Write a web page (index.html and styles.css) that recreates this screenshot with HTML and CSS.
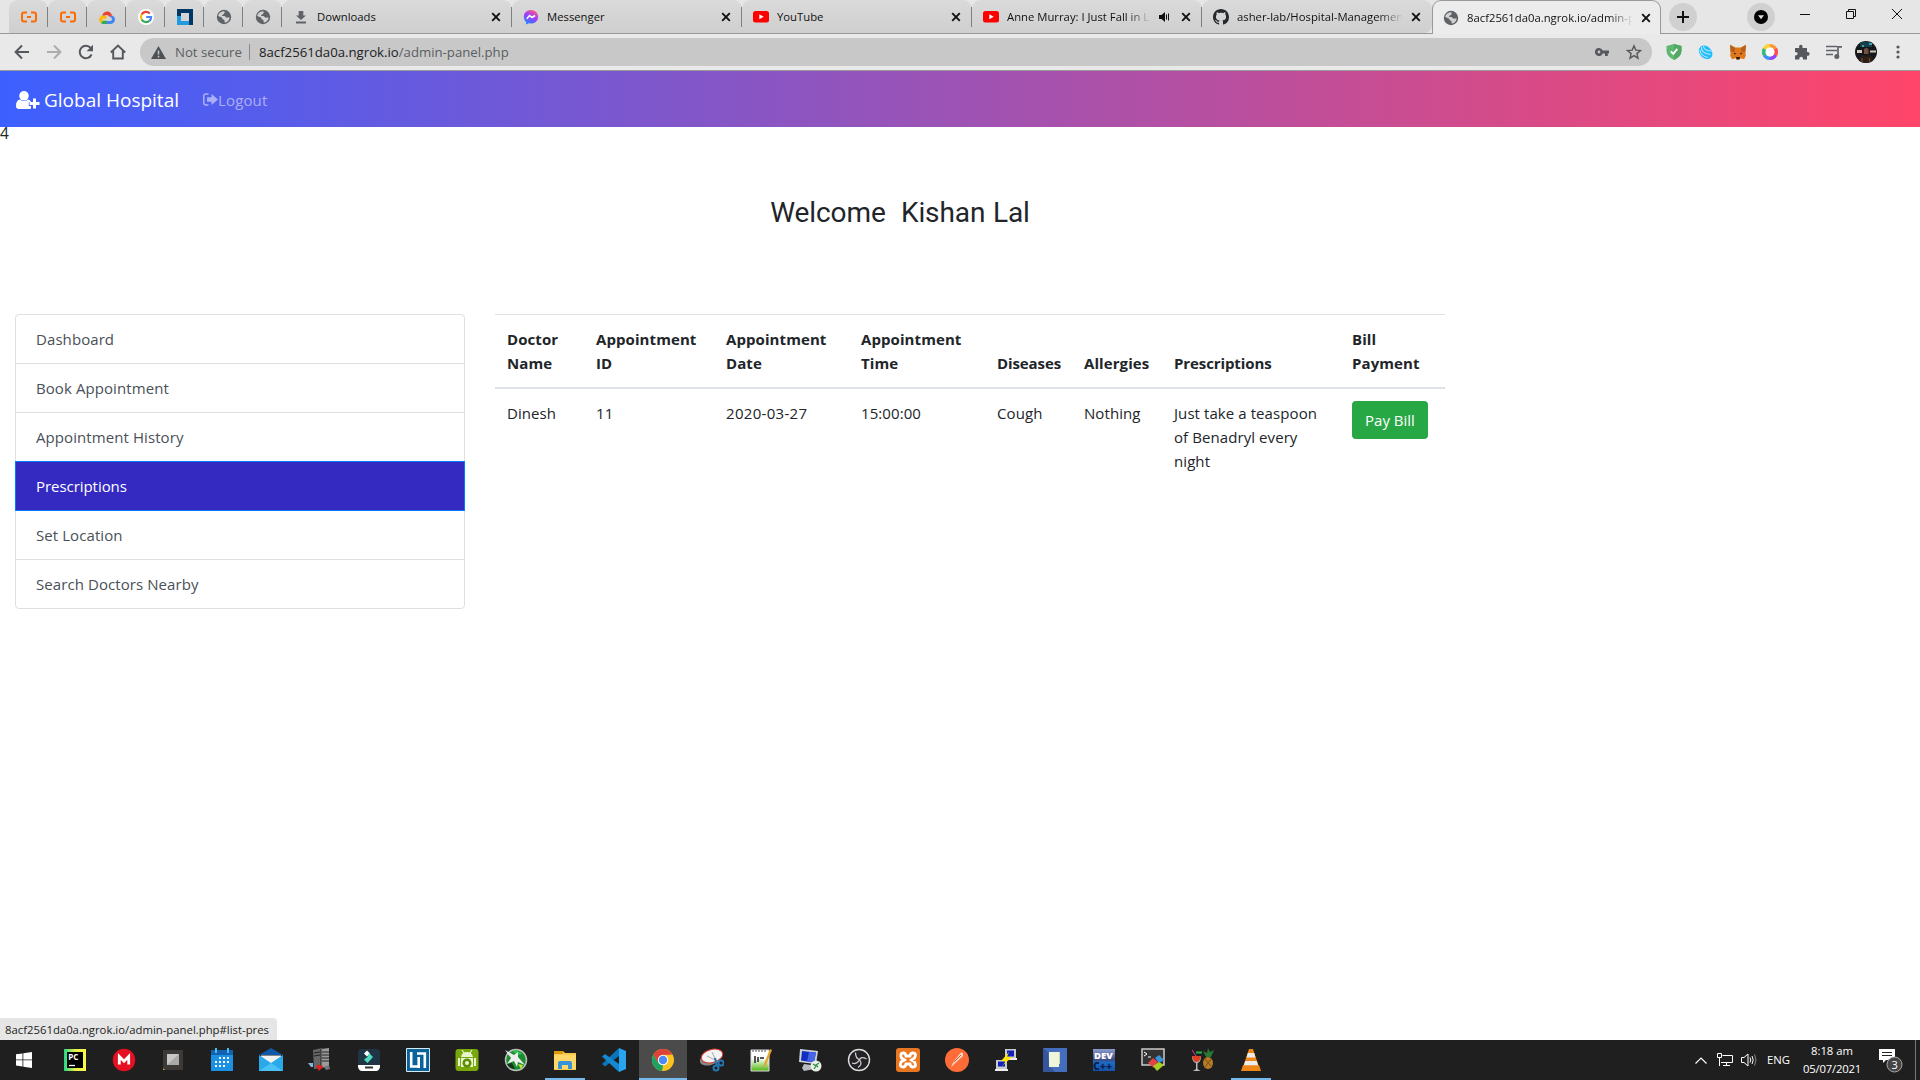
FILE: index.html
```html
<!DOCTYPE html>
<html lang="en">
<head>
<meta charset="utf-8">
<title>Global Hospital</title>
<link rel="stylesheet" href="styles.css">
</head>
<body>
<svg width="0" height="0" class="defs">
  <defs>
    <symbol id="globe" viewBox="0 0 16 16"><circle cx="8" cy="8" r="7.2" fill="#5f6368"/><path d="M2.200 6.500C3 4 5 2.400 7.600 2.200c1.300.1 1.600.8.9 1.600-.5.6-.3 1-1 1.500-.8.4-1.500.3-1.400 1.100.1.9 1.200.5 2.200.6 1.200.1 1.100 1.400 2.100 1.600 1 .2 2.200-.3 3.300.2-.3 2.200-2 4.300-4.500 4.800-.9-.1-.7-1.100-.6-2-.1-1-1.700-.8-2.200-1.900-.3-1-.7-1.400-1.700-1.700-.9-.2-1.900-.5-2.500-1.500z" fill="#d2d2d2"/></symbol>
    <symbol id="x" viewBox="0 0 10 10"><path d="M1.200 1.200l7.600 7.600M8.800 1.200L1.200 8.800" stroke="#111" stroke-width="1.900" fill="none"/></symbol>
    <symbol id="yt" viewBox="0 0 16 12"><rect width="16" height="11.500" rx="2.500" fill="#f00"/><path d="M6.300 3.300v5l4.400-2.500z" fill="#fff"/></symbol>
    <symbol id="ali" viewBox="0 0 18 12"><path d="M7 1.500H4Q2 1.500 2 3.500v5q0 2 2 2h3M11 1.500h3q2 0 2 2v5q0 2-2 2h-3M7 6h4" fill="none" stroke="#ff6a00" stroke-width="2"/></symbol>
  </defs>
</svg>

<header class="tabstrip">
  <div class="tab pinned"><svg width="18" height="12"><use href="#ali"/></svg></div>
  <div class="tab pinned"><svg width="18" height="12"><use href="#ali"/></svg></div>
  <div class="tab pinned"><svg width="16" height="13" viewBox="0 0 16 13"><path d="M3 4.500Q5 0 9 .5q3 .5 4 4L11 6Q8 2.500 5 5z" fill="#ea4335"/><path d="M13 4.500q3 1 3 4.300-.5 3.700-4.500 4.200H8v-3h3.500q1.800-.3 1.500-2Q12.500 6 10.800 6z" fill="#4285f4"/><path d="M8 13H4.500Q3 13 1.800 12L4 9.800h4z" fill="#34a853"/><path d="M3 4.500Q0 6 0 9q.4 2.200 1.800 3L4 9.800Q3 9 3.500 8q1-1.200 2.500.3L8.200 6Q6.500 4 3 4.500z" fill="#fbbc05"/></svg></div>
  <div class="tab pinned"><svg width="16" height="16" viewBox="0 0 16 16"><circle cx="8" cy="8" r="8" fill="#fff"/><g fill="none" stroke-width="2.200"><path d="M11.800 4.400A5.100 5.100 0 0 0 3.600 5.600" stroke="#ea4335"/><path d="M3.600 5.500a5.100 5.100 0 0 0 0 5" stroke="#fbbc05"/><path d="M3.600 10.400a5.100 5.100 0 0 0 7.900 1.400" stroke="#34a853"/><path d="M11.400 11.900A5 5 0 0 0 13.100 8H8.200" stroke="#4285f4"/></g></svg></div>
  <div class="tab pinned"><svg width="16" height="16" viewBox="0 0 16 16"><path d="M0 0h16v16h-4V4H4v3H0z" fill="#003764"/><path d="M0 7h4v5h8v4H0z" fill="#1f9bde"/></svg></div>
  <div class="tab pinned"><svg width="16" height="16"><use href="#globe"/></svg></div>
  <div class="tab pinned"><svg width="16" height="16"><use href="#globe"/></svg></div>
  <div class="tab"><svg width="16" height="16" viewBox="0 0 16 16"><path d="M5.700 2h4.600v4.500H13L8 11 3 6.500h2.700zM3 12.500h10v2H3z" fill="#5f6368"/></svg><span class="tab-title">Downloads</span><svg class="close" width="10" height="10"><use href="#x"/></svg></div>
  <div class="tab"><svg width="16" height="16" viewBox="0 0 16 16"><defs><linearGradient id="mg" x1="0.200" y1="1" x2="0.700" y2="0"><stop offset="0" stop-color="#1a8dff"/><stop offset=".55" stop-color="#9a3cff"/><stop offset="1" stop-color="#ff5c80"/></linearGradient></defs><path d="M8 1c4.200 0 7.200 3 7.200 6.800s-3 6.800-7.200 6.800l-2.200-.3L3 15.500v-2.600C1.500 11.500.8 9.800.8 7.800.8 4 3.800 1 8 1z" fill="url(#mg)"/><path d="M3.800 9.700l2.700-3.200 2.600 2 3-2" stroke="#fff" stroke-width="1.600" fill="none"/></svg><span class="tab-title">Messenger</span><svg class="close" width="10" height="10"><use href="#x"/></svg></div>
  <div class="tab"><svg width="16" height="12"><use href="#yt"/></svg><span class="tab-title">YouTube</span><svg class="close" width="10" height="10"><use href="#x"/></svg></div>
  <div class="tab"><svg width="16" height="12"><use href="#yt"/></svg><span class="tab-title fade short">Anne Murray: I Just Fall in L</span><svg width="11" height="10" viewBox="0 0 11 10"><path d="M0 3h2.500L6 0v10L2.500 7H0z" fill="#111"/><path d="M7.500 2.500v5M9.500 1.500v7" stroke="#111"/></svg><svg class="close" width="10" height="10"><use href="#x"/></svg></div>
  <div class="tab nosep"><svg width="16" height="16" viewBox="0 0 16 16"><path fill="#24292e" d="M8 0C3.580 0 0 3.580 0 8c0 3.540 2.290 6.530 5.470 7.590.4.070.55-.17.55-.38 0-.19-.01-.82-.01-1.490-2.010.37-2.530-.49-2.690-.94-.09-.23-.48-.94-.82-1.130-.28-.15-.68-.52-.01-.53.63-.01 1.080.58 1.230.82.720 1.210 1.870.87 2.330.66.070-.52.280-.87.510-1.070-1.780-.2-3.640-.89-3.640-3.950 0-.87.310-1.590.82-2.150-.08-.2-.36-1.020.08-2.120 0 0 .67-.21 2.200.82.640-.18 1.320-.27 2-.27s1.360.09 2 .27c1.530-1.040 2.200-.82 2.200-.82.44 1.100.16 1.920.08 2.120.51.56.82 1.270.82 2.150 0 3.070-1.870 3.750-3.650 3.950.29.25.54.73.54 1.480 0 1.070-.01 1.930-.01 2.200 0 .21.150.46.55.38A8.010 8.010 0 0 0 16 8c0-4.420-3.580-8-8-8z"/></svg><span class="tab-title fade">asher-lab/Hospital-Managemen</span><svg class="close" width="10" height="10"><use href="#x"/></svg></div>
  <div class="tab active"><svg width="16" height="16"><use href="#globe"/></svg><span class="tab-title fade">8acf2561da0a.ngrok.io/admin-p</span><svg class="close" width="10" height="10"><use href="#x"/></svg></div>
  <div class="round plus"><svg width="12" height="12" viewBox="0 0 12 12"><path d="M6 0v12M0 6h12" stroke="#111" stroke-width="2"/></svg></div>
  <div class="round search"><svg width="14" height="14" viewBox="0 0 14 14"><circle cx="7" cy="7" r="7" fill="#000"/><path d="M4 5.300h6L7 9.300z" fill="#ddd"/></svg></div>
  <div class="winctl">
    <svg width="10" height="10" viewBox="0 0 10 10"><path d="M0 5.500h10" stroke="#111"/></svg>
    <svg width="10" height="10" viewBox="0 0 10 10"><path d="M.5 2.500h7v7h-7zM2.500 2.500v-2h7v7h-2" stroke="#111" fill="none"/></svg>
    <svg width="10" height="10" viewBox="0 0 10 10"><path d="M0 0l10 10M10 0L0 10" stroke="#111" fill="none"/></svg>
  </div>
</header>

<div class="toolbar">
  <svg class="tb" viewBox="0 0 16 16"><path d="M15 8H2M8 1.500L1.600 8 8 14.500" fill="none" stroke="#55585c" stroke-width="2"/></svg>
  <svg class="tb" viewBox="0 0 16 16"><path d="M1 8h13M8 1.500L14.400 8 8 14.500" fill="none" stroke="#acacac" stroke-width="2"/></svg>
  <svg class="tb" viewBox="0 0 16 16"><path d="M13.600 10.500A6.200 6.200 0 1 1 12.700 4" fill="none" stroke="#55585c" stroke-width="2"/><path d="M15 .8v6.400H8.600z" fill="#55585c"/></svg>
  <svg class="tb" viewBox="0 0 16 16"><path d="M.8 8.500L8 1.600l7.200 6.900M3.200 7v7.500h9.600V7" fill="none" stroke="#55585c" stroke-width="1.900"/></svg>
  <div class="omnibox">
    <svg width="15" height="13" viewBox="0 0 15 13"><path d="M7.500 0L15 13H0z" fill="#4d5054"/><path d="M7.500 4.500v4M7.500 9.800v1.600" stroke="#c8c8c8" stroke-width="1.500"/></svg>
    <span class="secure">Not secure</span>
    <span class="divider"></span>
    <span class="url"><b>8acf2561da0a.ngrok.io</b>/admin-panel.php</span>
    <svg class="key" width="14" height="8" viewBox="0 0 14 8"><path fill-rule="evenodd" d="M4 0a4 4 0 0 1 3.700 2.600H14v2.800h-1.200V8H10V5.400H7.700A4 4 0 1 1 4 0zm0 2.600a1.400 1.400 0 1 0 0 2.800 1.400 1.400 0 0 0 0-2.800z" fill="#55585c"/></svg>
    <svg width="16" height="16" viewBox="0 0 16 16"><path d="M8 1.800l1.800 4.300 4.700.4-3.600 3.100 1.100 4.600L8 11.700l-4 2.500 1.100-4.600L1.500 6.500l4.700-.4z" fill="none" stroke="#55585c" stroke-width="1.400"/></svg>
  </div>
  <svg class="tb" viewBox="0 0 16 16"><path d="M8 0l7.500 2v5q-.5 6-7.500 9Q1 13 .5 7V2z" fill="#5fb770"/><path d="M8 0l7.500 2v5q-.5 6-7.500 9z" fill="#54a866"/><path d="M4.800 7.300l2.500 2.600 4-5" stroke="#fff" stroke-width="1.800" fill="none"/></svg>
  <svg class="tb" viewBox="0 0 16 16"><ellipse cx="8" cy="8.500" rx="7.600" ry="5.900" transform="rotate(45 8 8)" fill="#22bdfb"/><path d="M3.500 3q-1 6 9 7.500M5.500 2q0 5 8.500 5M1.800 6q1 6 8 7.500" stroke="#b6e9ff" fill="none" stroke-width="1.100"/></svg>
  <svg class="tb" viewBox="0 0 16 16"><path d="M0 .8l5.500 2.700h5L16 .8l-.6 7 .4 4-1.800 3.400-3.500-1-1 1.300h-3l-1-1.300-3.500 1L.2 11.800l.4-4z" fill="#e2761b"/><path d="M0 .8l5.500 3.700L4 8 .6 7.800zM16 .8l-5.500 3.700L12 8l3.400-.2z" fill="#b5611f"/><path d="M6 13h4l-.6 2.400H6.600z" fill="#2a1c15"/><path d="M3.800 8.600l2.700 1.200-2 .7zM12.200 8.600L9.500 9.800l2 .7z" fill="#30221b"/></svg>
  <svg class="tb" viewBox="0 0 16 16"><g fill="none" stroke-width="3.600" transform="rotate(-90 8 8)"><circle cx="8" cy="8" r="6.200" stroke="#ff9636"/><circle cx="8" cy="8" r="6.200" stroke="#ff4e52" pathLength="6" stroke-dasharray="1 5" stroke-dashoffset="-1"/><circle cx="8" cy="8" r="6.200" stroke="#8e44ff" pathLength="6" stroke-dasharray="1 5" stroke-dashoffset="-2"/><circle cx="8" cy="8" r="6.200" stroke="#3694ff" pathLength="6" stroke-dasharray="1 5" stroke-dashoffset="-3"/><circle cx="8" cy="8" r="6.200" stroke="#23c182" pathLength="6" stroke-dasharray="1 5" stroke-dashoffset="-4"/><circle cx="8" cy="8" r="6.200" stroke="#ffd43b" pathLength="6" stroke-dasharray="1 5" stroke-dashoffset="-5"/></g><circle cx="8" cy="8" r="4.500" fill="#fff"/></svg>
  <svg class="tb" viewBox="0 0 16 16"><path d="M1 4h4.200Q4.600 1 6.800.8 9 1 8.500 4H13v4q2.700-.3 2.600 1.900Q15.500 12 13 11.700V15.500H9q.2-2.700-1.900-2.700-2 .1-1.900 2.700H1v-4q2.700.1 2.700-1.800Q3.600 7.800 1 8z" fill="#55585c"/></svg>
  <svg class="tb" viewBox="0 0 16 16"><path d="M0 2.500h11M0 6.500h11M0 10.500h7M12 13V2.800h4" stroke="#606367" stroke-width="1.700" fill="none"/><circle cx="10.800" cy="12.500" r="2.500" fill="#606367"/></svg>
  <svg class="tb avatar" viewBox="0 0 22 22"><defs><clipPath id="av"><circle cx="11" cy="11" r="11"/></clipPath></defs><g clip-path="url(#av)"><path d="M0 0h22v22H0z" fill="#14181c"/><path d="M5 1h12v5H5z" fill="#153f49"/><path d="M2 9h5v3H2zM15 9.500h6v2h-6z" fill="#d3c9b8"/><path d="M7 4h2v2H7zM14 2h3v2h-3z" fill="#38a3af"/><path d="M9 8q2.500-2 4.500 0v5h-4.500z" fill="#764d3e"/><path d="M3 22q1-8 6-8l2 2 2-2q5 0 6 8z" fill="#2b2019"/><path d="M7 17v4M14 17l1 4" stroke="#80522d"/></g></svg>
  <svg class="tb" viewBox="0 0 16 16"><g fill="#55585c"><circle cx="8" cy="3" r="1.600"/><circle cx="8" cy="8" r="1.600"/><circle cx="8" cy="13" r="1.600"/></g></svg>
</div>

<nav class="navbar">
  <svg width="24" height="18" viewBox="0 0 24 18"><circle cx="8" cy="4.800" r="4.800" fill="#fff"/><path d="M4 8.500q4 3 8 0 2.200.3 3 2.500h-2.200v4H15v2.500q-.8.500-2 .5H3q-3 0-3-3 0-6 4-6.500z" fill="#fff"/><path d="M18.500 7.500v10M13.500 12.500h10" stroke="#fff" stroke-width="3"/></svg>
  <a class="brand">Global Hospital</a>
  <svg class="out" width="15" height="13" viewBox="0 0 15 13"><path d="M5.500 1H3Q.8 1 .8 3.200v6.600Q.8 12 3 12h2.500" fill="none" stroke="currentColor" stroke-width="1.500"/><path d="M4 4.300h4.500V1L15 6.500 8.500 12V8.700H4z" fill="currentColor"/></svg>
  <a class="logout">Logout</a>
</nav>

<main class="page">
  <div class="count">4</div>
  <h3 class="welcome">Welcome &nbsp;Kishan Lal</h3>
  <div class="row">
    <div class="list">
      <a class="item">Dashboard</a>
      <a class="item">Book Appointment</a>
      <a class="item">Appointment History</a>
      <a class="item on">Prescriptions</a>
      <a class="item">Set Location</a>
      <a class="item">Search Doctors Nearby</a>
    </div>
    <table class="table">
      <colgroup><col class="c1"><col class="c2"><col class="c3"><col class="c4"><col class="c5"><col class="c6"><col class="c7"><col class="c8"></colgroup>
      <thead><tr><th>Doctor<br>Name</th><th>Appointment<br>ID</th><th>Appointment<br>Date</th><th>Appointment<br>Time</th><th class="tight">Diseases</th><th>Allergies</th><th class="tight">Prescriptions</th><th>Bill<br>Payment</th></tr></thead>
      <tbody><tr><td>Dinesh</td><td>11</td><td class="date">2020-03-27</td><td>15:00:00</td><td>Cough</td><td>Nothing</td><td>Just take a teaspoon<br>of Benadryl every<br>night</td><td><button class="pay">Pay Bill</button></td></tr></tbody>
    </table>
  </div>
</main>
<div class="status">8acf2561da0a.ngrok.io/admin-panel.php#list-pres</div>

<footer class="taskbar">
  <div class="app start"><svg width="16" height="16" viewBox="0 0 16 16"><path d="M0 2.300L6.500 1.400v6.100H0zM7.300 1.300L16 0v7.500H7.300zM0 8.300h6.500v6.100L0 13.500zM7.300 8.300H16V16l-8.700-1.300z" fill="#fff"/></svg></div>
  <div class="app"><svg viewBox="0 0 24 24"><defs><linearGradient id="pc"><stop offset="0" stop-color="#21d789"/><stop offset=".5" stop-color="#e8ef49"/><stop offset="1" stop-color="#fcf84a"/></linearGradient></defs><path d="M1 1h22v22H1z" fill="url(#pc)"/><path d="M4 4h16v16H4z" fill="#000"/><path d="M6 17.500h6" stroke="#fff" stroke-width="1.300"/><text x="5.200" y="12" class="ico-pc">PC</text></svg></div>
  <div class="app"><svg viewBox="0 0 24 24"><circle cx="12" cy="12" r="11.200" fill="#e51022"/><path d="M7.300 16.500v-8l4.700 4.700 4.700-4.700v8" stroke="#fff" stroke-width="2.800" fill="none"/></svg></div>
  <div class="app"><svg viewBox="0 0 24 24"><path d="M2 2h20v20H2z" fill="#3c3936"/><path d="M2 20l2 2H2z" fill="#c5a030"/><path d="M6 6h12v11H6z" fill="#aaa"/><path d="M6 6h12L6 17z" fill="#c8c8c8"/></svg></div>
  <div class="app"><svg viewBox="0 0 24 24"><path d="M1 3h22v20H1z" fill="#1b91e4"/><path d="M1 2h22v5H1z" fill="#1262b0"/><path d="M6 0v5M18 0v5" stroke="#48bdf5" stroke-width="2"/><path fill="#fff" d="M9 9h2v2H9zM13 9h2v2h-2zM17 9h2v2h-2zM5 13h2v2H5zM9 13h2v2H9zM13 13h2v2h-2zM17 13h2v2h-2zM5 17h2v2H5zM9 17h2v2H9zM13 17h2v2h-2z"/></svg></div>
  <div class="app"><svg viewBox="0 0 24 24"><path d="M0 7L12 0l12 7z" fill="#0d59a8"/><path d="M2 7.500h20v8H2z" fill="#f1f1f1"/><path d="M0 7l12 8L24 7v16H0z" fill="#29a8ea"/><path d="M12 15L0 23h24z" fill="#48c2f7"/></svg></div>
  <div class="app"><svg viewBox="0 0 24 24"><path d="M5 2l9-2v20l-8 1z" fill="#666"/><path d="M13 1l8-1v18l-8 2z" fill="#9b9b9b"/><path d="M13 1v19M6 5l6-1M6 8l6-1M14 4h7M14 7h7M14 10h7M14 13h7" stroke="#222"/><path d="M0 15h5v4H3z" fill="#82b5df"/><path d="M8 18q3-3 4 0 2-2 3 1l-4 4z" fill="#d22"/><path d="M16 19l5-2 1 4-4 1z" fill="#777"/></svg></div>
  <div class="app"><svg viewBox="0 0 24 24"><rect x="1" y="1" width="22" height="22" rx="4" fill="#1f3545"/><path d="M1 17h22v2q-1 4-4 4H5q-3 0-4-4z" fill="#fff"/><path d="M7 5.500l3-3 3 3-3 3z" fill="#fff"/><path d="M12 5l4 4-5.500 6L7 11.500 10.500 9z" fill="#4cdcc0"/><path d="M8 19.500h8" stroke="#333" stroke-width="2"/></svg></div>
  <div class="app"><svg viewBox="0 0 24 24"><path d="M.5.500h23v23H.5z" fill="#09639a" stroke="#d6eaf5"/><path d="M5.200 4v14.500H12M11 5.500h7.800V20M12.700 9v11" stroke="#fff" stroke-width="2.600" fill="none"/></svg></div>
  <div class="app"><svg viewBox="0 0 24 24"><rect x=".5" y="1" width="23" height="22" rx="3" fill="#79a80b"/><path d="M6 9q1-5 6-5t6 5zM3 10h2v8H3zM19 10h2v8h-2zM6 10h12v9H6z" fill="#e9f5ce"/><circle cx="12" cy="15" r="4.500" fill="#5d8a08"/><circle cx="12" cy="15" r="2" fill="#e9f5ce"/><path d="M7 2l2 3M17 2l-2 3" stroke="#fff"/></svg></div>
  <div class="app"><svg viewBox="0 0 24 24"><circle cx="12" cy="12" r="10.500" fill="#1c8e31" stroke="#b8c1b8" stroke-width="1.500"/><path d="M8 3q6-2 10 3l-4 1z" fill="#32c050"/><path d="M1 2l9 5 4-3v5l7 8-7-3-1 5-3-6-7 3 4-6z" fill="#eee"/><path d="M3 16l5-1 3 6q-6 0-8-5z" fill="#15351c"/><path d="M14 16l5 1-2 4z" fill="#c8e333"/></svg></div>
  <div class="app open"><svg viewBox="0 0 24 24"><path d="M1 3h9l2 2h11v17H1z" fill="#f7c94c"/><path d="M1 3h9v3H1z" fill="#db9b0d"/><path d="M1 7h22v14H1z" fill="#ffd869"/><path d="M5 21v-6q0-2 2-2h10q2 0 2 2v6h-4v-4H9v4z" fill="#3794d8"/></svg></div>
  <div class="app"><svg viewBox="0 0 24 24"><path d="M17 0v8L3 18.500 0 16z" fill="#0a75bd"/><path d="M17 24v-8L3 6 0 8.500z" fill="#1688cf"/><path d="M17 0l7 3v18l-7 3z" fill="#29a5ef"/></svg></div>
  <div class="app current"><svg viewBox="0 0 24 24"><circle cx="12" cy="12" r="11" fill="#fbc31d"/><path d="M2.500 6.500A11 11 0 0 1 21.500 6.500L12 7l-5 8z" fill="#dd4137"/><path d="M2.500 6.500L7 14.500l5 3-1 5.500A11 11 0 0 1 2.500 6.500z" fill="#1da261"/><circle cx="12" cy="12" r="5.200" fill="#fff"/><circle cx="12" cy="12" r="4.200" fill="#4c8bf5"/></svg></div>
  <div class="app"><svg viewBox="0 0 24 24"><ellipse cx="10" cy="11" rx="10.500" ry="6" transform="rotate(-18 10 11)" fill="#888"/><ellipse cx="12" cy="8" rx="11" ry="6.500" transform="rotate(-15 12 8)" fill="#f4f4f4" stroke="#d93b37"/><path d="M12 4l5 11M7 8l12 6" stroke="#aaa"/><g fill="none" stroke="#2477b4" stroke-width="2"><circle cx="21" cy="15" r="2.500"/><circle cx="16" cy="20" r="2.500"/><path d="M15 10l2 8"/></g></svg></div>
  <div class="app"><svg viewBox="0 0 24 24"><defs><linearGradient id="np" x2="0" y2="1"><stop offset=".4" stop-color="#fff"/><stop offset="1" stop-color="#4eb50b"/></linearGradient></defs><path d="M2 2h18v21H2z" fill="url(#np)" stroke="#ddd"/><path d="M4 2v2M7 2v2M10 2v2M13 2v2M16 2v2" stroke="#555"/><path d="M6 8v7M9 9v5M11 10h4" stroke="#222" stroke-width="1.500"/><path d="M21 1l2 1-6 15-3 3 1-4z" fill="#e9a32c"/></svg></div>
  <div class="app"><svg viewBox="0 0 24 24"><path d="M2 1l18 2-2 13-17-2z" fill="#ccd4da"/><path d="M4 3l14 1.500-2 10L3 12.500z" fill="#102ec0"/><path d="M11 4l7 .5-2 10-7-1z" fill="#4765e5"/><path d="M6 16l7 1 3 4-10 2-2-3z" fill="#b9bcbe"/><circle cx="18" cy="18" r="5.500" fill="#e9eee8"/><path d="M15 16l3 2-2 3M21 15l-3 2 2 2" stroke="#329240" fill="none" stroke-width="1.300"/></svg></div>
  <div class="app"><svg viewBox="0 0 24 24"><circle cx="12" cy="12" r="10.500" fill="#242226" stroke="#ddd" stroke-width="1.400"/><path fill="none" stroke="#ccc" stroke-width="1.300" d="M8.500 4.500q0 6 4 7M19.500 11q-5-3-7 .5M11 19.500q5-3 1.500-8M5 15q4 2 7.500-3"/></svg></div>
  <div class="app"><svg viewBox="0 0 24 24"><rect width="24" height="24" rx="3" fill="#e87722"/><path d="M8.500 12L5.500 10q-2-5 2-5 2 0 2.500 3h4q.5-3 3-3 4 0 1.500 5l-3 2 3 2q2.500 5-1.500 5-2.500 0-3-3h-4q-.5 3-3 3-4 0-2-5z" fill="none" stroke="#fff" stroke-width="2.800"/></svg></div>
  <div class="app"><svg viewBox="0 0 24 24"><circle cx="12" cy="12" r="12" fill="#ff6c37"/><path d="M18 5l-2-.5-7 8.500-3 6 5-4.500 7-6.500z" fill="#fbd9ca"/><path d="M9 14l7-7" stroke="#d95523"/></svg></div>
  <div class="app"><svg viewBox="0 0 24 24"><path d="M11 1h11v9H11zM2 12h11v9H2z" fill="#ccc"/><path d="M13 2.500h7v6h-7zM4 13.500h7v5H4z" fill="#1020bb"/><path d="M12 10h11v2H12zM1 21h13v2H1z" fill="#eee"/><path d="M15 4L7 13h5l-4 5 10-9h-5z" fill="#ffe500"/></svg></div>
  <div class="app"><svg viewBox="0 0 24 24"><path d="M0 0h24v24H0z" fill="#456dbe"/><path d="M6 18l6 6H0V0l5 4z" fill="#34549c"/><path d="M6 4h10v15H6z" fill="#eef5d8"/><path d="M16.500 4v12" stroke="#cfd8b0"/></svg></div>
  <div class="app"><svg viewBox="0 0 24 24"><defs><linearGradient id="dv" x2="0" y2="1"><stop offset="0" stop-color="#8c9cd0"/><stop offset=".5" stop-color="#3b4c86"/><stop offset=".6" stop-color="#1c6cc4"/><stop offset="1" stop-color="#1652a5"/></linearGradient></defs><path d="M1 1h22v22H1z" fill="url(#dv)"/><text x="2" y="10.500" class="ico-dev">DEV</text><text x="1" y="22" class="ico-cpp">C++</text></svg></div>
  <div class="app"><svg viewBox="0 0 24 24"><path d="M1 1h22v16H1z" fill="#333" stroke="#ccc" stroke-width="1.500"/><path d="M3 4l3 2-3 2M7 9h3" stroke="#fff" fill="none"/><path d="M7 15l5-5 5 4-4 6z" fill="#e44245"/><path d="M14 10l4-3 5 5-5 3z" fill="#3994dc"/><path d="M12 18l6-4 5 3-7 6z" fill="#a5ce26"/></svg></div>
  <div class="app"><svg viewBox="0 0 24 24"><ellipse cx="18" cy="15" rx="5" ry="6" fill="#b77d26"/><path d="M13 3l4 2 1-5 2 4 4-2-3 7h-5z" fill="#267a36"/><path d="M15 11l6 7M21 11l-6 8" stroke="#7d4e13"/><path d="M2 8h9q0 6-3.500 7v6l3 2H3l3-2v-6q-4-1-4-7z" fill="#bbb"/><path d="M2 8h9q-1 6-4.500 6T2 8z" fill="#da4223"/><path d="M2 2l4 6" stroke="#e23e9d"/><path d="M6 4.500h6" stroke="#24b44b" stroke-width="2"/></svg></div>
  <div class="app open"><svg viewBox="0 0 24 24"><path d="M4 17h16l2 6H2z" fill="#ee8718"/><path d="M10 1h4l6 18q-8 4-16 0z" fill="#ee8718"/><path d="M8.800 5h6.400l1.300 4.500H7.500zM6.200 13h11.600l1.300 4.200H4.900z" fill="#ececec"/></svg></div>
  <div class="tray">
    <svg width="12" height="7" viewBox="0 0 12 7"><path d="M.5 6.500L6 1l5.500 5.500" fill="none" stroke="#fff" stroke-width="1.200"/></svg>
    <svg class="net" width="16" height="14" viewBox="0 0 16 14"><path d="M5.500 2.500h10v7H4M.5.500h4v4h-4zM2.500 4.500v8.500M9.500 9.500v3M6 12.500h7" fill="none" stroke="#fff"/></svg>
    <svg class="vol" width="16" height="14" viewBox="0 0 16 14"><path d="M.5 4.500H3l4-3.500v12L3 9.500H.5zM9 4.500q1.500 2.500 0 5M11 3q2.500 4 0 8" fill="none" stroke="#fff"/><path d="M13.500 1.500q3 5.500 0 11" fill="none" stroke="#888"/></svg>
    <span class="lang">ENG</span>
    <div class="clock"><span>8:18 am</span><span class="day">05/07/2021</span></div>
    <svg class="note" width="24" height="25" viewBox="0 0 24 25"><path d="M0 1h16v11H7l-3 3v-3H0z" fill="#fff"/><path d="M3 4.500h10M3 7.500h10" stroke="#222"/><circle cx="15.500" cy="16.500" r="7.500" fill="#454545" stroke="#aaa"/><text x="12.600" y="20.600" class="ico-n">3</text></svg>
    <span class="peek"></span>
  </div>
</footer>
</body>
</html>
```
FILE: styles.css
```css
* { box-sizing: border-box; }
body { margin: 0; width: 1920px; height: 1080px; overflow: hidden; display: flex; flex-direction: column; background: #fff; color: #212529; font: 15px/24px "Open Sans", sans-serif; }
.defs { position: absolute; }
svg { flex: none; display: block; }

.tabstrip { height: 34px; flex: none; display: flex; padding-left: 9px; background: #e6e6e6; border-bottom: 1px solid #999; }
.tab { position: relative; width: 230px; height: 33px; flex: none; display: flex; align-items: center; padding: 1px 11px 0; border-radius: 9px 9px 0 0; background: linear-gradient(#dadada, #cfcfcf); }
.tab:not(.nosep):not(.active)::after { content: ""; position: absolute; right: 0; top: 7px; width: 1px; height: 20px; background: #808080; }
.pinned { width: 39px; justify-content: center; padding: 1px 0 0; }
.tab-title { margin-left: 8px; width: 166px; overflow: hidden; white-space: nowrap; font-size: 11.300px; line-height: 20px; color: #111; }
.short { width: 144px; margin-right: 8px; }
.fade { -webkit-mask-image: linear-gradient(90deg, #000 calc(100% - 24px), transparent); mask-image: linear-gradient(90deg, #000 calc(100% - 24px), transparent); }
.close { margin-left: auto; }
.nosep { border-bottom-right-radius: 8px; }
.active { width: 229px; height: 34px; background: #ececec; border: 1px solid #999; border-bottom: 0; padding: 0 9px 0 10px; }
.round { width: 28px; height: 28px; margin-top: 3px; border-radius: 50%; background: #d0d0d0; display: flex; align-items: center; justify-content: center; }
.plus { margin-left: 8px; }
.search { margin-left: 50px; }
.winctl { display: flex; gap: 36px; margin: 9px 0 0 25px; }

.toolbar { height: 37px; flex: none; display: flex; align-items: center; gap: 16px; padding: 0 14px; background: #e9e9e9; border-bottom: 1px solid #999; }
.tb { width: 16px; height: 16px; }
.avatar { width: 22px; height: 22px; margin: 0 -3px; }
.omnibox { width: 1512px; height: 28px; margin: 0 -2px; flex: none; display: flex; align-items: center; padding: 0 10px 0 11px; border-radius: 14px; background: #c8c8c8; font-size: 13.200px; color: #5b5e62; }
.secure { margin-left: 9px; width: 74px; white-space: nowrap; }
.divider { width: 1px; height: 16px; background: #8a8a8a; }
.url { margin-left: 9px; white-space: nowrap; }
.url b { font-weight: 400; color: #202124; }
.key { margin: 0 17px 0 auto; }

.navbar { height: 56px; flex: none; display: flex; align-items: center; padding: 1px 16px 0; background: linear-gradient(90deg, #3c60ff, #ff4569); color: #fff; }
.brand { font-size: 19px; margin-left: 4px; width: 159px; white-space: nowrap; }
.out { color: #aab0f5; }
.logout { color: #aab0f5; letter-spacing: .150px; }

.page { flex: 1; min-height: 0; }
.count { height: 24px; margin-top: -6px; font-size: 15.500px; }
.welcome { margin: 51px 0 0; width: 1800px; height: 34px; text-align: center; font: 400 28px/34px Roboto, sans-serif; letter-spacing: -.1px; word-spacing: .8px; }
.row { display: flex; gap: 30px; padding: 84px 15px 0; align-items: flex-start; }
.list { width: 450px; border: 1px solid #dfdfdf; border-radius: 4px; }
.item { display: block; height: 49px; padding: 12px 20px; border-bottom: 1px solid #dfdfdf; color: #495057; letter-spacing: .080px; }
.item:last-child { border-bottom: 0; height: 48px; }
.item.on { margin: -1px -1px 0; height: 50px; padding: 12px 20px; background: #342ac1; border: 1px solid #007bff; color: #fff; letter-spacing: -.050px; }
.table { width: 950px; table-layout: fixed; border-collapse: separate; border-spacing: 0; letter-spacing: .080px; }
.c1 { width: 89px; } .c2 { width: 130px; } .c3 { width: 135px; } .c4 { width: 136px; } .c5 { width: 87px; } .c6 { width: 90px; } .c7 { width: 178px; } .c8 { width: 105px; }
th, td { padding: 12px; text-align: left; vertical-align: top; white-space: nowrap; }
th { vertical-align: bottom; font-weight: 700; border-top: 1px solid #dee2e6; border-bottom: 2px solid #dee2e6; }
.tight { letter-spacing: -.1px; }
.date { letter-spacing: .3px; }
.pay { width: 76px; height: 38px; padding: 0; border: 0; border-radius: 4px; background: #28a745; color: #fff; font: inherit; }

.status { position: absolute; left: 0; top: 1018px; width: 277px; height: 22px; padding-left: 5px; border-radius: 0 4px 0 0; background: #e6e6e6; color: #222; font-size: 11.340px; line-height: 23px; white-space: nowrap; }

.taskbar { height: 40px; flex: none; display: flex; gap: 1px; background: #1f1f1f; color: #fff; }
.app { width: 48px; height: 40px; flex: none; display: flex; align-items: center; justify-content: center; position: relative; }
.app svg { width: 24px; height: 24px; }
.start { margin-right: 2px; }
.start svg { width: 16px; height: 16px; }
.open::after, .current::after { content: ""; position: absolute; left: 4px; right: 4px; bottom: 0; height: 2px; background: #76b9ed; }
.current { background: #4b4b4b; }
.current::after { left: 0; right: 0; }
.tray { margin-left: auto; display: flex; align-items: center; font-size: 11.300px; line-height: 18px; }
.net { margin-left: 10px; }
.vol { margin-left: 8px; }
.lang { margin-left: 10px; width: 24px; }
.clock { display: flex; flex-direction: column; align-items: center; width: 58px; margin-left: 12px; white-space: nowrap; }
.day { letter-spacing: -.2px; }
.note { margin-left: 18px; }
.peek { width: 1px; height: 40px; background: #777; margin: 0 4px 0 12px; }
.ico-pc { font: 700 8px "Open Sans", sans-serif; fill: #fff; }
.ico-dev { font: 800 9.500px "Open Sans", sans-serif; fill: #fff; }
.ico-cpp { font: 800 10.500px "Open Sans", sans-serif; fill: #0a1e50; }
.ico-n { font: 11px "Open Sans", sans-serif; fill: #fff; }
```
